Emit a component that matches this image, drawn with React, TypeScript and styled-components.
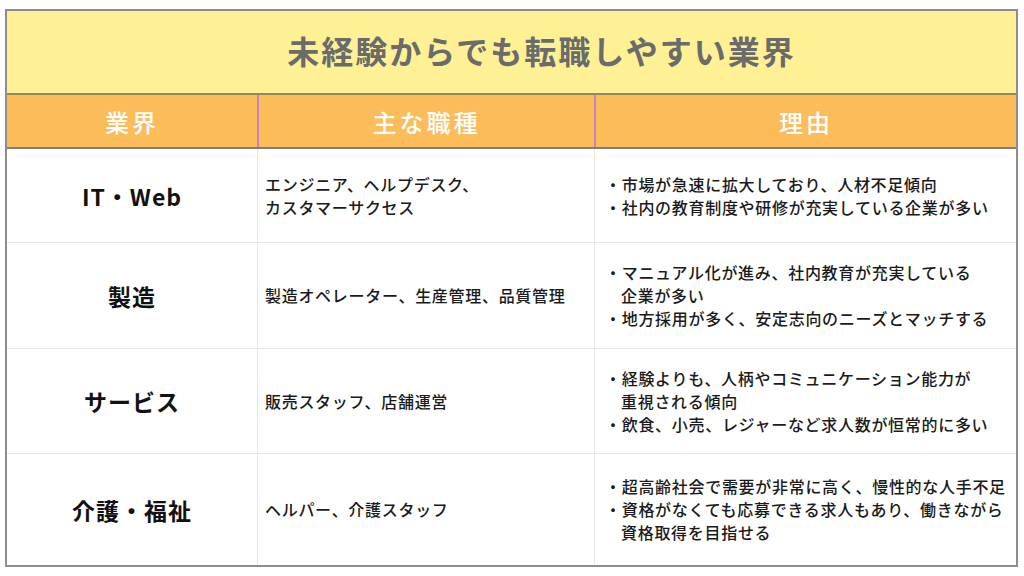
import React from 'react';
import styled, { createGlobalStyle } from 'styled-components';

const GlobalStyle = createGlobalStyle`
    body {
        margin: 0;
        background: #ffffff;
        font-family: "Noto Sans CJK JP", "Noto Sans", sans-serif;
    }
`;

const Frame = styled.div`
    box-sizing: border-box;
    margin: 9px 0 0 5px;
    width: 1013px;
    border: 2px solid #8d8d8d;
`;

const Title = styled.div`
    box-sizing: border-box;
    height: 84px;
    display: flex;
    align-items: center;
    justify-content: center;
    padding: 0 0 4px 60px;
    background: #fef095;
    border-bottom: 2px solid #8f8a62;
    color: #6b6b6b;
    font-size: 32px;
    font-weight: 700;
    letter-spacing: 2px;
`;

const Row = styled.div<{ $h: number; $head?: boolean }>`
    box-sizing: border-box;
    display: grid;
    grid-template-columns: 250px 337px 1fr;
    height: ${p => p.$h}px;
    background: ${p => (p.$head ? '#fdbc5a' : '#ffffff')};
    border-bottom: ${p => (p.$head ? '2px solid #7d7d7d' : '1px solid #e6e6e6')};
    &:last-child {
        border-bottom: none;
    }
`;

const HeadCell = styled.div`
    display: flex;
    align-items: center;
    justify-content: center;
    color: #ffffff;
    font-size: 24px;
    font-weight: 500;
    letter-spacing: 3px;
    & + & {
        border-left: 2px solid #c884b8;
    }
`;

const NameCell = styled.div`
    display: flex;
    align-items: center;
    justify-content: center;
    color: #111111;
    font-size: 23px;
    font-weight: 700;
    letter-spacing: 1px;
`;

const TextCell = styled.div<{ $pad: number }>`
    display: flex;
    flex-direction: column;
    justify-content: center;
    padding-left: ${p => p.$pad}px;
    border-left: 1px solid #e6e6e6;
    color: #1a1a1a;
    font-size: 16px;
    font-weight: 500;
    line-height: 23px;
    letter-spacing: 0.7px;
    white-space: nowrap;
`;

const Item = styled.div`
    padding-left: 1em;
    text-indent: -1em;
`;

type Industry = {
    name: string;
    jobs: string[];
    reasons: string[][];
    h: number;
};

const rows: Industry[] = [
    {
        name: 'IT・Web',
        jobs: ['エンジニア、ヘルプデスク、', 'カスタマーサクセス'],
        reasons: [['市場が急速に拡大しており、人材不足傾向'], ['社内の教育制度や研修が充実している企業が多い']],
        h: 94,
    },
    {
        name: '製造',
        jobs: ['製造オペレーター、生産管理、品質管理'],
        reasons: [['マニュアル化が進み、社内教育が充実している', '企業が多い'], ['地方採用が多く、安定志向のニーズとマッチする']],
        h: 106,
    },
    {
        name: 'サービス',
        jobs: ['販売スタッフ、店舗運営'],
        reasons: [['経験よりも、人柄やコミュニケーション能力が', '重視される傾向'], ['飲食、小売、レジャーなど求人数が恒常的に多い']],
        h: 105,
    },
    {
        name: '介護・福祉',
        jobs: ['ヘルパー、介護スタッフ'],
        reasons: [['超高齢社会で需要が非常に高く、慢性的な人手不足'], ['資格がなくても応募できる求人もあり、働きながら', '資格取得を目指せる']],
        h: 111,
    },
];

const App: React.FC = () => {
    return (
        <>
            <GlobalStyle />
            <Frame>
                <Title>未経験からでも転職しやすい業界</Title>
                <Row $h={54} $head>
                    <HeadCell>業界</HeadCell>
                    <HeadCell>主な職種</HeadCell>
                    <HeadCell>理由</HeadCell>
                </Row>
                {rows.map(r => (
                    <Row key={r.name} $h={r.h}>
                        <NameCell>{r.name}</NameCell>
                        <TextCell $pad={7}>
                            {r.jobs.map(j => <div key={j}>{j}</div>)}
                        </TextCell>
                        <TextCell $pad={10}>
                            {r.reasons.map(lines => (
                                <Item key={lines[0]}>
                                    ・{lines.map((l, i) => (
                                        <React.Fragment key={l}>{i > 0 && <br />}{l}</React.Fragment>
                                    ))}
                                </Item>
                            ))}
                        </TextCell>
                    </Row>
                ))}
            </Frame>
        </>
    );
};

export default App;
